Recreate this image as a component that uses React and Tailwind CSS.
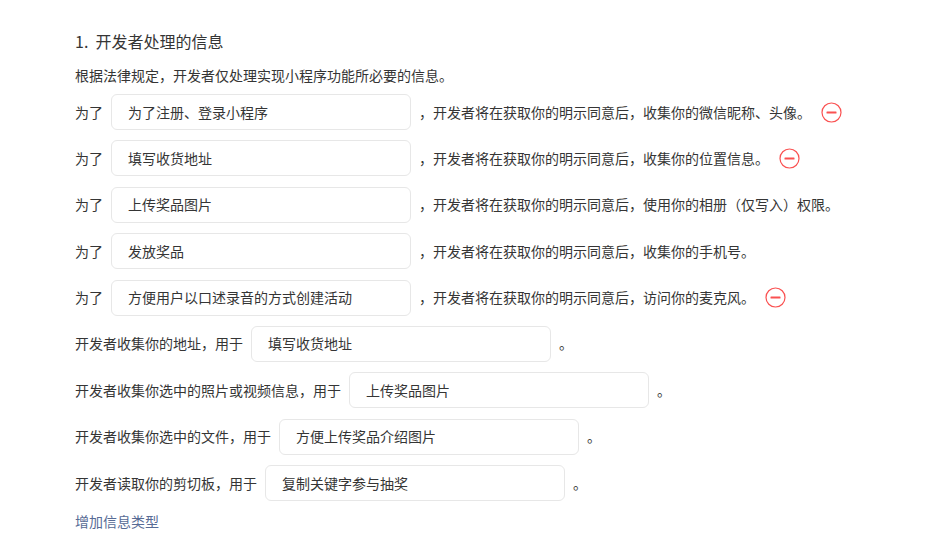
import React from 'react'

const purposeRows = [
  { value: '为了注册、登录小程序', text: '，开发者将在获取你的明示同意后，收集你的微信昵称、头像。', removable: true },
  { value: '填写收货地址', text: '，开发者将在获取你的明示同意后，收集你的位置信息。', removable: true },
  { value: '上传奖品图片', text: '，开发者将在获取你的明示同意后，使用你的相册（仅写入）权限。' },
  { value: '发放奖品', text: '，开发者将在获取你的明示同意后，收集你的手机号。' },
  { value: '方便用户以口述录音的方式创建活动', text: '，开发者将在获取你的明示同意后，访问你的麦克风。', removable: true },
]

const usageRows = [
  { label: '开发者收集你的地址，用于', value: '填写收货地址' },
  { label: '开发者收集你选中的照片或视频信息，用于', value: '上传奖品图片' },
  { label: '开发者收集你选中的文件，用于', value: '方便上传奖品介绍图片' },
  { label: '开发者读取你的剪切板，用于', value: '复制关键字参与抽奖' },
]

function Field({ value }) {
  return (
    <div className="w-[300px] h-9 shrink-0 flex items-center px-[16px] border border-[#e7e7e7] rounded-[6px] bg-white text-[14px] text-[#353535]">
      {value}
    </div>
  )
}

function RemoveIcon() {
  return (
    <svg width="21" height="21" viewBox="0 0 21 21" className="shrink-0 ml-[10px]">
      <circle cx="10.5" cy="10.5" r="9.5" fill="none" stroke="#fa5151" strokeWidth="1.2" />
      <rect x="5.5" y="9.5" width="10" height="2" rx="0.5" fill="#fa5151" />
    </svg>
  )
}

export default function App() {
  return (
    <div
      className="w-[934px] h-[547px] bg-white pl-[75px] pt-[29px] text-[#353535] overflow-hidden"
      style={{ fontFamily: '"Noto Sans CJK SC", "Noto Sans", sans-serif' }}
    >
      <h3 className="text-[16px] leading-6">1.&nbsp;&nbsp;开发者处理的信息</h3>
      <p className="mt-[12px] text-[14px] leading-5">根据法律规定，开发者仅处理实现小程序功能所必要的信息。</p>

      <div className="mt-[9px] flex flex-col gap-[10.4px] text-[14px]">
        {purposeRows.map((r, i) => (
          <div key={i} className="flex items-center h-9">
            <span className="mr-[8px]">为了</span>
            <Field value={r.value} />
            <span className="ml-[8px]">{r.text}</span>
            {r.removable && <RemoveIcon />}
          </div>
        ))}
        {usageRows.map((r, i) => (
          <div key={i} className="flex items-center h-9">
            <span className="mr-[8px]">{r.label}</span>
            <Field value={r.value} />
            <span className="ml-[8px]">。</span>
          </div>
        ))}
      </div>

      <a className="block mt-[10px] text-[14px] leading-5 text-[#576b95] cursor-pointer">增加信息类型</a>
    </div>
  )
}
